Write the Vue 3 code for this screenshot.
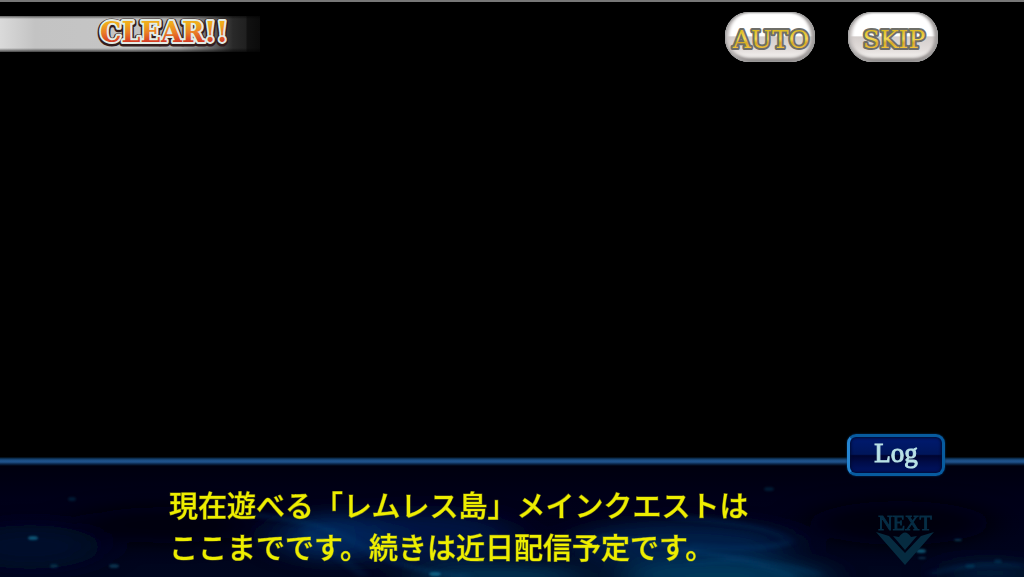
<script setup>
const lines = ['現在遊べる「レムレス島」メインクエストは', 'ここまでです。続きは近日配信予定です。']
const controls = ['AUTO', 'SKIP']
const stars = [
  [33, 81, 5, 2, 0.6], [72, 42, 4, 2, 0.2], [54, 109, 4, 2, 0.25], [114, 109, 5, 2, 0.35],
  [435, 117, 6, 2, 0.6], [769, 32, 5, 2, 0.2], [958, 83, 4, 1, 0.45], [921, 94, 5, 2, 0.6],
  [922, 101, 4, 1, 0.35], [998, 104, 4, 2, 0.2], [970, 109, 5, 2, 0.2]
]
</script>

<template>
  <main class="stage">
    <header class="topbar">
      <div class="banner">
        <svg class="clear" width="140" height="40" viewBox="0 0 140 40" role="img" aria-label="CLEAR!!">
          <defs>
            <linearGradient id="fire" x1="0" y1="0" x2="0" y2="1">
              <stop offset="0.2" stop-color="#f0ad1c" />
              <stop offset="0.5" stop-color="#ea7e26" />
              <stop offset="0.8" stop-color="#d63c24" />
            </linearGradient>
          </defs>
          <text class="clear-shadow" x="71" y="27" text-anchor="middle">CLEAR!!</text>
          <text class="clear-text" x="71" y="26" text-anchor="middle" fill="url(#fire)">CLEAR!!</text>
        </svg>
      </div>
      <nav class="controls">
        <button v-for="label in controls" :key="label" class="pill" type="button" :aria-label="label">
          <svg width="90" height="50" viewBox="0 0 90 50">
            <defs>
              <linearGradient :id="'gold' + label" x1="0" y1="0" x2="0" y2="1">
                <stop offset="0.2" stop-color="#dfbd25" />
                <stop offset="0.48" stop-color="#f5da55" />
                <stop offset="0.62" stop-color="#d5a923" />
                <stop offset="0.8" stop-color="#f3c53a" />
              </linearGradient>
            </defs>
            <text class="pill-text" x="46" y="36" text-anchor="middle" :fill="`url(#gold${label})`">{{ label }}</text>
          </svg>
        </button>
      </nav>
    </header>

    <section class="dialogue">
      <svg class="nebula" viewBox="0 0 1024 120" preserveAspectRatio="none" aria-hidden="true">
        <defs>
          <linearGradient id="deep" x1="0" y1="0" x2="0" y2="1">
            <stop offset="0" stop-color="#00000c" />
            <stop offset="0.35" stop-color="#000018" />
            <stop offset="1" stop-color="#00061e" />
          </linearGradient>
          <filter id="soft" x="-60%" y="-150%" width="220%" height="400%"><feGaussianBlur stdDeviation="20 9" /></filter>
          <filter id="fine" x="-20%" y="-60%" width="140%" height="220%"><feGaussianBlur stdDeviation="5 2" /></filter>
          <filter id="dot" x="-60%" y="-60%" width="220%" height="220%"><feGaussianBlur stdDeviation="1" /></filter>
        </defs>
        <rect width="1024" height="120" fill="url(#deep)" />
        <g filter="url(#soft)">
          <ellipse cx="30" cy="90" rx="70" ry="22" fill="#000e2a" />
          <ellipse cx="340" cy="80" rx="60" ry="22" fill="#003069" opacity="0.9" />
          <ellipse cx="425" cy="80" rx="90" ry="26" fill="#002052" opacity="0.7" />
          <ellipse cx="680" cy="88" rx="110" ry="22" fill="#002454" opacity="0.8" />
          <ellipse cx="500" cy="120" rx="90" ry="12" fill="#003456" />
          <ellipse cx="720" cy="120" rx="105" ry="17" fill="#00385c" />
          <ellipse cx="990" cy="116" rx="45" ry="9" fill="#002442" />
          <ellipse cx="165" cy="68" rx="90" ry="18" fill="#000009" />
          <ellipse cx="900" cy="66" rx="90" ry="22" fill="#00000d" />
        </g>
        <g filter="url(#fine)" fill="none" stroke="#075084" opacity="0.3">
          <path d="M250 58Q320 62 360 88T470 120M305 72Q340 102 365 119M600 80Q710 90 795 120" stroke-width="4" />
          <path d="M670 60Q775 67 790 85Q760 95 690 88M690 107Q760 98 820 118M930 117Q975 104 1024 109" stroke-width="3" />
          <path d="M680 95Q730 97 760 106" stroke-width="4" />
        </g>
        <g filter="url(#dot)" fill="#1786a8">
          <ellipse v-for="(s, i) in stars" :key="i" :cx="s[0]" :cy="s[1]" :rx="s[2]" :ry="s[3]" :opacity="s[4]" />
        </g>
      </svg>
      <div class="rule"></div>
      <button class="log" type="button">Log</button>
      <div class="content">
        <p class="message"><span v-for="line in lines" :key="line">{{ line }}</span></p>
        <button class="next" type="button">
          <span>NEXT</span>
          <svg width="58" height="34" viewBox="0 0 58 34" aria-hidden="true">
            <path d="M0 0L13 4L29 21L45 4L58 0L29 33Z" />
            <path d="M17 4L23 5Q29-4 35 5L41 4L29 18Z" />
          </svg>
        </button>
      </div>
    </section>
  </main>
</template>

<style>
html, body { background: #000; }
</style>

<style scoped>
.stage {
  min-height: 100vh;
  box-sizing: border-box;
  border-top: 2px solid #777;
  background: #000;
  display: flex;
  flex-direction: column;
  justify-content: space-between;
  overflow: hidden;
}
button { border: 0; padding: 0; background: none; cursor: pointer; }
.topbar { display: flex; justify-content: space-between; align-items: flex-start; padding-top: 10px; }
.banner {
  box-sizing: border-box;
  width: 260px;
  height: 36px;
  margin-top: 4px;
  padding-left: 93px;
  background:
    linear-gradient(180deg, #0008 0, #0000 3px, #0000 32px, #000a 36px),
    linear-gradient(90deg, #dadada 0, #c3c3c3 35px, #c5c5c5 130px, #aaa 180px, #666 212px, #292929 233px, #202020 246px, #111 247px, #0b0b0b 260px);
}
.clear { display: block; overflow: visible; }
.clear text { font: bold 27px "DejaVu Serif", serif; paint-order: stroke; stroke-linejoin: round; }
.clear-shadow { fill: #2b1515; stroke: #321c1c; stroke-width: 7px; }
.clear-text { stroke: #e3ece6; stroke-width: 4px; }
.controls { display: flex; gap: 33px; padding-right: 86px; }
.pill {
  width: 90px;
  height: 50px;
  border-radius: 24px;
  background: linear-gradient(180deg, #fff 0, #fff 47%, #d4cecc 50%, #e2dddb 75%, #f7f5f3 94%);
  box-shadow: inset 0 0 2px 1px #999, inset 5px 0 3px -1px #c8c3c2, inset -5px 0 3px -1px #a8a3a2, inset 0 -5px 3px -1px #8f8a89;
}
.pill svg { display: block; }
.pill-text { font: 25px "DejaVu Serif", serif; paint-order: stroke; stroke: #6e6e68; stroke-width: 4px; stroke-linejoin: round; }
.dialogue { position: relative; min-height: 120px; }
.nebula { position: absolute; inset: 0; width: 100%; height: 100%; }
.rule {
  position: relative;
  height: 9px;
  background: linear-gradient(180deg, #000 0, #08243f 1px, #1b4d83 3px, #20538d 5px, #0a2548 7px, #00000c 9px);
}
.log {
  position: absolute;
  top: -23px;
  right: 79px;
  box-sizing: border-box;
  width: 98px;
  height: 42px;
  border: 3px solid #075b9f;
  border-left-color: #2585d2;
  border-radius: 9px;
  background: linear-gradient(180deg, #001a70 0, #00165a 48%, #00042f 52%, #000c48 70%, #001565 100%);
  box-shadow: inset 0 0 3px 1px #000b30, 0 0 2px #053b70;
  color: #b9e2e6;
  font: 27px/30px "Liberation Serif", serif;
  -webkit-text-stroke: 1px #b9e2e6;
  padding-bottom: 4px;
}
.content { position: relative; display: flex; justify-content: space-between; padding: 17px 90px 10px 169px; }
.message {
  margin: 0;
  color: #eeee00;
  font: 500 29px/42px "Noto Sans CJK JP", sans-serif;
  -webkit-text-stroke: 1px #eeee0066;
  white-space: nowrap;
}
.message span { display: block; }
.next {
  display: flex;
  flex-direction: column;
  align-items: center;
  align-self: flex-start;
  margin-top: 31px;
  color: #062d45;
  font: 20px/18px "Liberation Serif", serif;
  -webkit-text-stroke: 1px #062d45;
}
.next svg { fill: #062b40; display: block; }
</style>
